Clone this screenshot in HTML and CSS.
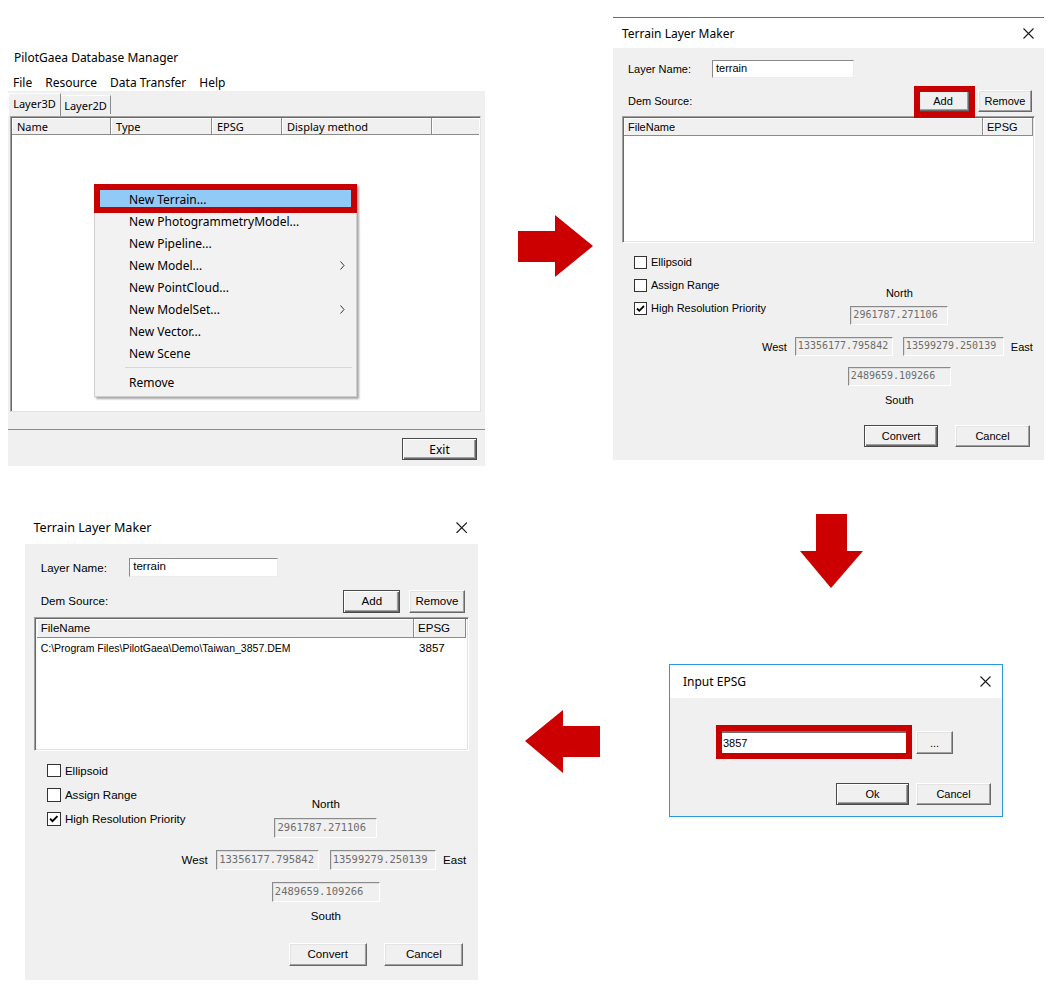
FILE: index.html
```html
<!DOCTYPE html>
<html>
<head>
<meta charset="utf-8">
<title>Terrain workflow</title>
<link rel="stylesheet" href="styles.css">
</head>
<body>
<div class="canvas">
  <svg class="arrows" width="1062" height="993" viewBox="0 0 1062 993">
    <polygon points="518,231 555,231 555,215 593,246 555,277 555,262 518,262"/>
    <polygon points="816,514 847,514 847,551 863,551 831,588 800,551 816,551"/>
    <polygon points="600,726 563,726 563,710 525,741 563,773 563,757 600,757"/>
  </svg>

  <!-- Window 1: Database manager -->
  <section class="dbm">
    <div class="dbm-title">PilotGaea Database Manager</div>
    <nav class="dbm-menu"><span>File</span><span>Resource</span><span>Data Transfer</span><span>Help</span></nav>
    <div class="dbm-panel">
      <div class="tabs">
        <span class="tab tab-on">Layer3D</span>
        <span class="tab tab-off">Layer2D</span>
      </div>
      <div class="tab-page">
        <div class="lv">
          <div class="lv-head">
            <span class="lh lh-name">Name</span>
            <span class="lh lh-type">Type</span>
            <span class="lh lh-epsg">EPSG</span>
            <span class="lh lh-disp">Display method</span>
            <span class="lh lh-rest"></span>
          </div>
        </div>
      </div>
      <div class="dbm-foot"><div class="btn btn-def btn-exit">Exit</div></div>
    </div>
  </section>

  <div class="ctx">
    <div class="mi hl">New Terrain...</div>
    <div class="mi">New PhotogrammetryModel...</div>
    <div class="mi">New Pipeline...</div>
    <div class="mi">New Model...<svg class="chev" width="5" height="9" viewBox="0 0 5 9"><polyline points="0.5,0.5 4,4.5 0.5,8.5"/></svg></div>
    <div class="mi">New PointCloud...</div>
    <div class="mi">New ModelSet...<svg class="chev" width="5" height="9" viewBox="0 0 5 9"><polyline points="0.5,0.5 4,4.5 0.5,8.5"/></svg></div>
    <div class="mi">New Vector...</div>
    <div class="mi">New Scene</div>
    <div class="sep"></div>
    <div class="mi">Remove</div>
  </div>

  <!-- Window 2: Terrain Layer Maker (empty) -->
  <section class="tlm tlm-a">
    <header class="tlm-title">
      <span>Terrain Layer Maker</span>
      <svg class="xbtn" width="11" height="11" viewBox="0 0 11 11"><path d="M0.5 0.5 L10.5 10.5 M10.5 0.5 L0.5 10.5"/></svg>
    </header>
    <div class="tlm-body">
      <div class="f-row"><span class="f-lbl">Layer Name:</span><div class="tb">terrain</div></div>
      <div class="d-row">
        <span class="d-lbl">Dem Source:</span>
        <div class="btn btn-def b-add marked">Add</div>
        <div class="btn b-rem">Remove</div>
      </div>
      <div class="flist">
        <div class="fl-head"><span class="fh fh-name">FileName</span><span class="fh fh-epsg">EPSG</span></div>
      </div>
      <div class="opts">
        <div class="checks">
          <div class="chk"><span class="box"></span>Ellipsoid</div>
          <div class="chk"><span class="box"></span>Assign Range</div>
          <div class="chk"><span class="box"><svg width="11" height="11" viewBox="0 0 11 11"><path d="M2 5.5 L4.3 7.8 L9 3"/></svg></span>High Resolution Priority</div>
        </div>
        <div class="range">
          <span class="r-n">North</span>
          <div class="ro r-ni">2961787.271106</div>
          <span class="r-w">West</span>
          <div class="ro r-wi">13356177.795842</div>
          <div class="ro r-ei">13599279.250139</div>
          <span class="r-e">East</span>
          <div class="ro r-si">2489659.109266</div>
          <span class="r-s">South</span>
        </div>
      </div>
      <div class="acts"><div class="btn btn-def b-conv">Convert</div><div class="btn b-cancel">Cancel</div></div>
    </div>
  </section>

  <!-- Window 3: Terrain Layer Maker (with file) -->
  <div class="slot-b">
    <section class="tlm tlm-b">
      <header class="tlm-title">
        <span>Terrain Layer Maker</span>
        <svg class="xbtn" width="11" height="11" viewBox="0 0 11 11"><path d="M0.5 0.5 L10.5 10.5 M10.5 0.5 L0.5 10.5"/></svg>
      </header>
      <div class="tlm-body">
        <div class="f-row"><span class="f-lbl">Layer Name:</span><div class="tb">terrain</div></div>
        <div class="d-row">
          <span class="d-lbl">Dem Source:</span>
          <div class="btn btn-def b-add">Add</div>
          <div class="btn b-rem">Remove</div>
        </div>
        <div class="flist">
          <div class="fl-head"><span class="fh fh-name">FileName</span><span class="fh fh-epsg">EPSG</span></div>
          <div class="fl-row"><span class="fr-name">C:\Program Files\PilotGaea\Demo\Taiwan_3857.DEM</span><span class="fr-epsg">3857</span></div>
        </div>
        <div class="opts">
          <div class="checks">
            <div class="chk"><span class="box"></span>Ellipsoid</div>
            <div class="chk"><span class="box"></span>Assign Range</div>
            <div class="chk"><span class="box"><svg width="11" height="11" viewBox="0 0 11 11"><path d="M2 5.5 L4.3 7.8 L9 3"/></svg></span>High Resolution Priority</div>
          </div>
          <div class="range">
            <span class="r-n">North</span>
            <div class="ro r-ni">2961787.271106</div>
            <span class="r-w">West</span>
            <div class="ro r-wi">13356177.795842</div>
            <div class="ro r-ei">13599279.250139</div>
            <span class="r-e">East</span>
            <div class="ro r-si">2489659.109266</div>
            <span class="r-s">South</span>
          </div>
        </div>
        <div class="acts"><div class="btn b-conv">Convert</div><div class="btn b-cancel">Cancel</div></div>
      </div>
    </section>
  </div>

  <!-- Window 4: Input EPSG -->
  <section class="epsg">
    <header class="epsg-title">
      <span>Input EPSG</span>
      <svg class="xbtn" width="11" height="11" viewBox="0 0 11 11"><path d="M0.5 0.5 L10.5 10.5 M10.5 0.5 L0.5 10.5"/></svg>
    </header>
    <div class="epsg-body">
      <div class="e-row">
        <div class="e-field"><div class="e-input">3857</div></div>
        <div class="btn b-dots">...</div>
      </div>
      <div class="e-acts"><div class="btn btn-def b-ok">Ok</div><div class="btn b-ecancel">Cancel</div></div>
    </div>
  </section>
</div>
</body>
</html>
```
FILE: styles.css
```css
* { box-sizing: border-box; }
body { margin: 0; background: #fff; color: #000; font-family: "Liberation Sans", Arial, sans-serif; }

.canvas { position: relative; width: 1062px; height: 993px; overflow: hidden; background: #fff; }
.arrows { position: absolute; left: 0; top: 0; fill: #cc0000; }

/* ---------- shared controls ---------- */
.btn {
  display: flex; align-items: center; justify-content: center;
  height: 22px; background: #f0f0f0; font-size: 11px; color: #000;
  border: 1px solid; border-color: #fff #696969 #696969 #fff;
  box-shadow: inset -1px -1px 0 #a0a0a0, inset 1px 1px 0 #e3e3e3;
}
.btn-def {
  border: 1px solid #4a4a4a;
  box-shadow: inset 1px 1px 0 #fff, inset -1px -1px 0 #696969, inset -2px -2px 0 #a0a0a0;
}
.xbtn { fill: none; stroke: #1a1a1a; stroke-width: 1.1; flex: none; }

/* ---------- window 1 ---------- */
.dbm { position: absolute; left: 8px; top: 48px; width: 477px; font-family: "Noto Sans", sans-serif; font-size: 12px; }
.dbm-title { height: 20px; line-height: 20px; padding-left: 6px; }
.dbm-menu { display: flex; gap: 13px; height: 23px; padding: 5px 0 0 5px; line-height: 20px; }
.dbm-panel { display: flex; flex-direction: column; height: 375px; background: #f0f0f0; }
.tabs { display: flex; align-items: flex-end; height: 25px; font-size: 11px; }
.tab { display: flex; align-items: center; justify-content: center; background: #f0f0f0; border: 1px solid; border-bottom: 0; }
.tab-on { width: 53px; height: 23px; padding-bottom: 4px; border-color: #fff #8a8a8a #fff #fff; }
.tab-off { width: 50px; height: 19px; margin-bottom: 2px; border-color: #fff #8a8a8a #fff #fff; border-left: 0; }
.tab-page { height: 314px; padding-left: 2px; border-bottom: 1px solid #8c8c8c; }
.lv {
  width: 471px; height: 296px; background: #fff; padding: 1px;
  border: 1px solid; border-color: #a0a0a0 #e3e3e3 #e3e3e3 #a0a0a0;
  box-shadow: inset 1px 1px 0 #696969;
}
.lv-head { display: flex; height: 17px; background: #f0f0f0; font-size: 11px; }
.lh {
  display: flex; align-items: center; padding-left: 5px;
  border-right: 1px solid #8c8c8c; border-bottom: 1px solid #8c8c8c;
  box-shadow: inset 1px 1px 0 #fff;
}
.lh-name { width: 99px; }
.lh-type { width: 101px; }
.lh-epsg { width: 70px; }
.lh-disp { width: 150px; }
.lh-rest { flex: 1; border-right: 0; }
.dbm-foot { flex: 1; display: flex; justify-content: flex-end; align-items: flex-start; padding: 8px 8px 0 0; }
.btn-exit { width: 75px; font-family: "Noto Sans", sans-serif; font-size: 12px; }

/* context menu */
.ctx {
  position: absolute; left: 94px; top: 184px; width: 263px;
  padding: 3px 0 3px; background: #f2f2f2; border: 1px solid #cfcfcf;
  box-shadow: 2px 2px 2px rgba(0, 0, 0, 0.35);
  font-family: "Noto Sans", sans-serif; font-size: 12px;
}
.mi { display: flex; align-items: center; justify-content: space-between; height: 22px; padding: 0 11px 0 34px; }
.mi.hl { position: relative; height: 18px; margin: 2px 4px 2px 5px; padding-left: 29px; background: #91c9f7; }
.mi.hl::after { content: ""; position: absolute; left: -6px; top: -6px; right: -5px; bottom: -5px; border: 6px solid #c80000; }
.chev { fill: none; stroke: #333; stroke-width: 1; }
.sep { height: 7px; padding-top: 3px; margin: 0 4px 0 30px; }
.sep::before { content: ""; display: block; height: 1px; background: #d7d7d7; }

/* ---------- terrain layer maker ---------- */
.tlm { width: 431px; font-size: 11px; }
.tlm-a { position: absolute; left: 613px; top: 17px; }
.slot-b { position: absolute; left: 25px; top: 511px; }
.tlm-b { zoom: 1.051; }
.tlm-title {
  display: flex; align-items: center; justify-content: space-between;
  height: 31px; padding: 0 10px 0 9px; background: #fff;
  font-family: "Noto Sans", sans-serif; font-size: 12px;
}
.tlm-a .tlm-title { border-top: 1px solid #6e6e6e; }
.tlm-b .tlm-title { padding-left: 8px; }
.tlm-body { height: 412px; padding: 12px 12px 0 9px; background: #f0f0f0; }
.tlm-b .tlm-body { height: 415px; padding-top: 14px; }
.f-row { display: flex; align-items: center; height: 18px; }
.f-lbl { width: 84px; margin-left: 6px; }
.tb {
  width: 142px; height: 18px; padding-left: 3px; line-height: 15px; background: #fff;
  border: 1px solid; border-color: #8a8a8a #ececec #ececec #8a8a8a;
}
.d-row { display: flex; align-items: center; height: 22px; margin-top: 12px; }
.d-lbl { flex: 1; margin-left: 6px; }
.b-add { width: 54px; margin-right: 8px; }
.b-rem { width: 54px; }
.marked { position: relative; }
.marked::after { content: ""; position: absolute; left: -3px; top: -5px; right: -6px; bottom: -7px; border: 6px solid #c80000; }
.flist {
  width: 413px; height: 127px; margin-top: 4px; padding: 1px; background: #fff;
  border: 1px solid; border-color: #a0a0a0 #fff #fff #a0a0a0;
  box-shadow: inset 1px 1px 0 #696969, inset -1px -1px 0 #e3e3e3;
}
.fl-head { display: flex; height: 18px; background: #f0f0f0; }
.fh {
  display: flex; align-items: center; padding-left: 4px;
  border-right: 1px solid #8c8c8c; border-bottom: 1px solid #8c8c8c;
  box-shadow: inset 1px 1px 0 #fff;
}
.fh-name { width: 359px; }
.fh-epsg { width: 50px; }
.fl-row { display: flex; height: 19px; align-items: center; font-size: 10px; }
.fr-name { width: 359px; padding-left: 4px; }
.fr-epsg { padding-left: 5px; font-size: 11px; }

.opts { display: flex; margin-top: 8px; }
.checks { flex: none; width: 128px; margin-left: 12px; }
.chk { display: flex; align-items: center; gap: 4px; height: 22px; white-space: nowrap; }
.chk + .chk { margin-top: 1px; }
.box {
  display: flex; align-items: center; justify-content: center; flex: none;
  width: 13px; height: 13px; background: #fff; border: 1px solid #333;
}
.box svg { fill: none; stroke: #000; stroke-width: 1.8; }

.range { display: grid; grid-template-columns: auto 98px 111px auto; align-items: center; margin-top: 35px; }
.tlm-b .range { margin-top: 36px; }
.ro {
  height: 19px; padding-left: 2px; line-height: 16px; background: #f0f0f0; color: #6d6d6d;
  font-family: "DejaVu Sans Mono", monospace; font-size: 10px; white-space: nowrap; overflow: hidden;
  border: 1px solid; border-color: #8a8a8a #fff #fff #8a8a8a;
  box-shadow: inset 1px 1px 0 #dcdcdc;
}
.r-n { grid-column: 2 / 4; justify-self: center; line-height: 14px; }
.r-ni { grid-column: 2 / 4; justify-self: center; width: 98px; margin-top: 6px; }
.r-w { grid-column: 1; padding-right: 8px; margin-top: 12px; }
.r-wi { grid-column: 2; width: 98px; margin-top: 12px; }
.r-ei { grid-column: 3; width: 101px; margin: 12px 0 0 10px; }
.r-e { grid-column: 4; padding-left: 7px; margin-top: 12px; }
.r-si { grid-column: 2 / 4; justify-self: center; width: 103px; margin-top: 11px; }
.r-s { grid-column: 2 / 4; justify-self: center; line-height: 14px; margin-top: 7px; }

.acts { display: flex; justify-content: flex-end; gap: 17px; margin: 18px 2px 0 0; }
.b-conv { width: 74px; }
.b-cancel { width: 75px; }

/* ---------- input epsg ---------- */
.epsg {
  position: absolute; left: 669px; top: 664px; width: 334px; height: 153px;
  display: flex; flex-direction: column; background: #f0f0f0; border: 1px solid #2a98df;
}
.epsg-title {
  display: flex; align-items: center; justify-content: space-between;
  height: 33px; padding: 0 11px 0 13px; background: #fff;
  font-family: "Noto Sans", sans-serif; font-size: 12px;
}
.epsg-body { flex: 1; padding: 33px 11px 0 52px; font-size: 11px; }
.e-row { display: flex; align-items: center; }
.e-field { position: relative; width: 184px; height: 23px; }
.e-field::after { content: ""; position: absolute; left: -6px; top: -6px; right: -6px; bottom: -5px; border: 6px solid #c80000; }
.e-input { height: 23px; padding-left: 1px; line-height: 21px; background: #fff; border-top: 2px solid #6e6e6e; }
.b-dots { width: 37px; height: 23px; margin-left: 10px; }
.e-acts { display: flex; justify-content: flex-end; gap: 7px; margin-top: 29px; }
.b-ok { width: 73px; }
.b-ecancel { width: 75px; }
```
